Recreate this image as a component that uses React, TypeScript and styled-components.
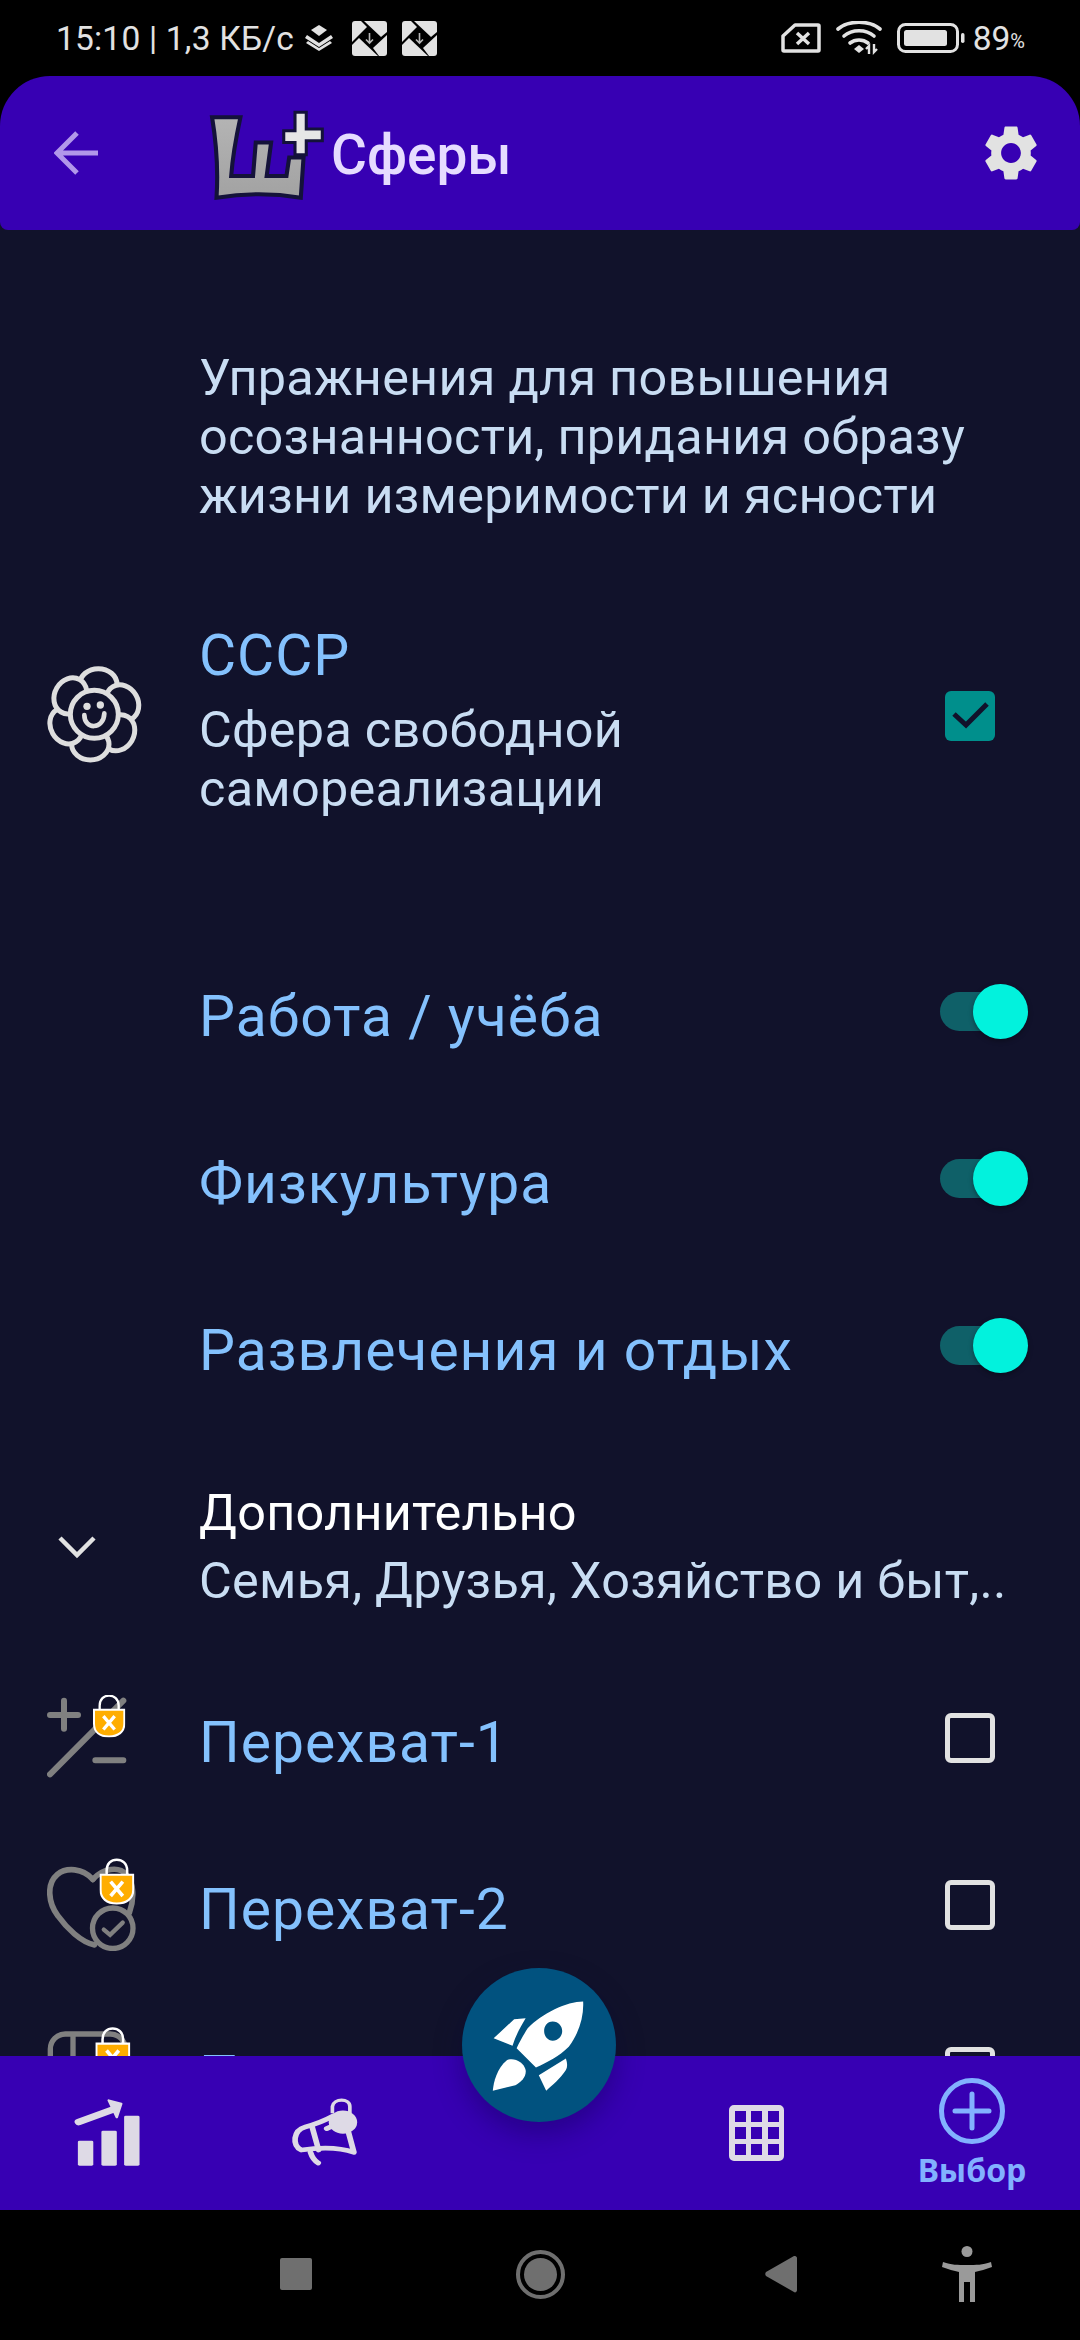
import React from "react";
import styled, { createGlobalStyle } from "styled-components";

const GlobalStyle = createGlobalStyle`
  html, body { margin: 0; padding: 0; background: #000; }
  body { font-family: Roboto, "Noto Sans", sans-serif; }
`;

const BG = "#11122b";
const PURPLE = "#3700b3";
const GREY = "#808080";

const Screen = styled.div`
  width: 1080px;
  height: 2340px;
  display: grid;
  grid-template-rows: 76px 154px 1fr 154px 130px;
  background: #000;
  position: relative;
  overflow: hidden;
`;

// status bar
const StatusBar = styled.div`
  display: flex;
  align-items: center;
  padding: 0 55px 0 56px;
  color: #e2e2e2;
  font-size: 33.5px;
  letter-spacing: 0.2px;
`;
const StatusText = styled.span`
  white-space: nowrap;
`;
const BatteryText = styled(StatusText)`
  margin-left: 8px;
  letter-spacing: 0;
`;
const Percent = styled.span`
  font-size: 20px;
  letter-spacing: 0;
  align-self: flex-end;
  margin-bottom: 23px;
`;
const Spacer = styled.div`
  flex: 1;
`;
const StatusIcon = styled.svg<{ $gap?: number }>`
  display: block;
  flex: none;
  margin-left: ${(p) => p.$gap ?? 0}px;
`;

// top bar
const AppBar = styled.header`
  background: ${PURPLE};
  border-radius: 50px 50px 8px 8px;
  display: flex;
  align-items: center;
  padding: 0 36px 0 54px;
  position: relative;
  z-index: 2;
`;
const LogoBox = styled.div`
  display: flex;
  margin: 3px 0 0 110px;
`;
const Title = styled.h1`
  margin: 4px 0 0 7px;
  font-size: 55px;
  font-weight: 500;
  color: #e6dcff;
  flex: 1;
`;

// content
const Content = styled.main`
  background: ${BG};
  margin-top: -8px;
  padding-top: 126px;
  overflow: hidden;
`;
const Intro = styled.p`
  margin: 0 0 98px 199px;
  font-size: 50.4px;
  line-height: 59px;
  letter-spacing: 0.25px;
  width: 800px;
  color: #c9ddf3;
`;
const Row = styled.div<{ $tall?: boolean }>`
  display: grid;
  grid-template-columns: 199px 1fr 220px;
  align-items: center;
  height: ${(p) => (p.$tall ? "auto" : "167px")};
`;
const SphereRow = styled(Row)`
  margin-bottom: 115px;
`;
const LeftIcon = styled.div`
  padding-left: 47px;
  margin-bottom: 12px;
  display: flex;
`;
const Chevron = styled.svg`
  display: block;
  margin-left: 57px;
`;
const RowTitle = styled.div`
  font-size: 57px;
  line-height: 66px;
  color: #84c1fd;
  letter-spacing: 1px;
`;
const RowSub = styled.div`
  font-size: 50.4px;
  line-height: 59px;
  letter-spacing: 0.25px;
  margin-top: 11px;
  color: #c9ddf3;
`;
const Control = styled.div`
  display: flex;
  justify-content: center;
  margin-bottom: 10px;
`;
const Check = styled.div<{ $on?: boolean }>`
  width: 50px;
  height: 50px;
  box-sizing: border-box;
  border-radius: 6px;
  background: ${(p) => (p.$on ? "#008f8c" : "transparent")};
  border: ${(p) => (p.$on ? "none" : "5px solid #e2e2e2")};
  display: flex;
  align-items: center;
  justify-content: center;
`;
const Track = styled.div`
  width: 74px;
  height: 39px;
  border-radius: 20px;
  background: #0f6068;
  position: relative;
  margin-left: 14px;
`;
const Thumb = styled.div`
  position: absolute;
  width: 55px;
  height: 55px;
  border-radius: 50%;
  top: -8px;
  right: -14px;
  background: #02f2dd;
  box-shadow: 0 2px 5px rgba(0, 0, 0, 0.35);
`;
const MoreRow = styled.div`
  display: flex;
  align-items: center;
  height: 225px;
`;
const MoreText = styled.div`
  margin-left: 102px;
`;
const MoreTitle = styled.div`
  font-size: 50.4px;
  line-height: 59px;
  letter-spacing: 0.25px;
  color: #fff;
`;
const MoreSub = styled.div`
  font-size: 50.4px;
  line-height: 59px;
  letter-spacing: 0.25px;
  margin-top: 9px;
  color: #c9ddf3;
  white-space: nowrap;
`;

// bottom navigation
const BottomNav = styled.nav`
  background: ${PURPLE};
  display: grid;
  grid-template-columns: 216px 216px 216px 216px 216px;
  position: relative;
  z-index: 2;
`;
const NavItem = styled.div<{ $top?: number }>`
  display: flex;
  flex-direction: column;
  align-items: center;
  padding-top: ${(p) => p.$top ?? 42}px;
`;
const NavLabel = styled.span`
  font-family: "Noto Sans", sans-serif;
  font-weight: 700;
  font-size: 32px;
  line-height: 40px;
  color: #82b1ff;
  margin-top: 6px;
`;
const Fab = styled.div`
  position: absolute;
  left: 462px;
  top: -88px;
  width: 154px;
  height: 154px;
  border-radius: 50%;
  background: #01527f;
  box-shadow: 0 12px 28px rgba(10, 0, 60, 0.35);
  display: flex;
`;

// system navigation
const SystemNav = styled.div`
  display: flex;
  align-items: center;
  padding-left: 280px;
  padding-bottom: 2px;
`;
const SysSquare = styled.div`
  width: 32px;
  height: 32px;
  border-radius: 2px;
  background: #6f6f6f;
`;
const SysCircle = styled.div`
  width: 49px;
  height: 49px;
  box-sizing: border-box;
  border-radius: 50%;
  border: 4px solid #6f6f6f;
  margin-left: 204px;
  display: flex;
  align-items: center;
  justify-content: center;
  &::after {
    content: "";
    width: 33px;
    height: 33px;
    border-radius: 50%;
    background: #6f6f6f;
  }
`;
const SysBack = styled.svg`
  margin-left: 200px;
`;
const SysPerson = styled.svg`
  margin-left: 145px;
`;

const Lock = ({ x, y, w = 97, h = 129 }: { x: number; y: number; w?: number; h?: number }) => (
  <svg x={x} y={y} width={w} height={h} viewBox="0 0 97 129">
    <path d="M20 50V34C20 14 33 4 48 4S77 14 77 34V50" fill="none" stroke="#fff" strokeWidth="7" />
    <path d="M3 46H94V88C94 112 76 126 48 126S3 112 3 88Z" fill="#ffad00" stroke="#fff" strokeWidth="6" />
    <path d="M31 65L65 105M65 65L31 105" stroke="#fff" strokeWidth="10" />
  </svg>
);

const WandIcon = () => (
  <svg width="80" height="83" viewBox="145 105 240 248" preserveAspectRatio="none">
    <g stroke={GREY} strokeWidth="18" strokeLinecap="round" fill="none">
      <path d="M154 165H238M196 122V206M290 300H374M154 342L374 122" />
    </g>
    <Lock x={283} y={103} />
  </svg>
);

const HeartIcon = () => (
  <svg width="89" height="94" viewBox="147 588 268 282">
    <g stroke={GREY} strokeWidth="17" fill="none" strokeLinecap="round">
      <path d="M285 655C255 620 205 618 178 640C145 668 150 725 180 765C205 800 250 845 290 852" />
      <path d="M285 655C315 620 365 615 385 640C410 665 410 715 395 755" />
    </g>
    <circle cx="345" cy="802" r="61" fill={BG} stroke={GREY} strokeWidth="16" />
    <path d="M318 806L337 822L375 785" fill="none" stroke={GREY} strokeWidth="13" strokeLinecap="round" />
    <Lock x={305} y={590} w={105} h={142} />
  </svg>
);

const PanelIcon = () => (
  <svg width="84" height="90" viewBox="160 1088 252 270">
    <g stroke={GREY} strokeWidth="16" fill="none">
      <rect x="170" y="1112" width="225" height="200" rx="45" />
      <path d="M238 1112V1312" />
      <circle cx="283" cy="1205" r="18" />
    </g>
    <Lock x={305} y={1090} w={105} h={142} />
  </svg>
);

const Flower = () => (
  <svg width="96" height="97" viewBox="80 203 288 291">
    {[0, 60, 120, 180, 240, 300].map((a) => (
      <ellipse
        key={a}
        cx="234"
        cy="258"
        rx="56"
        ry="47"
        fill={BG}
        stroke="#dedede"
        strokeWidth="15"
        transform={`rotate(${a} 222 348)`}
      />
    ))}
    <circle cx="222" cy="348" r="72" fill={BG} stroke="#dedede" strokeWidth="15" />
    <circle cx="200" cy="324" r="11" fill="#dedede" />
    <circle cx="240" cy="320" r="11" fill="#dedede" />
    <path d="M192 350C192 395 250 395 252 345" fill="none" stroke="#dedede" strokeWidth="14" strokeLinecap="round" />
  </svg>
);

const AppLogo = () => (
  <svg width="116" height="91" viewBox="600 325 340 272" preserveAspectRatio="none">
    <defs>
      <linearGradient id="logoFill" x1="0" y1="0" x2="0" y2="1">
        <stop offset="0" stopColor="#b4b4b4" />
        <stop offset="1" stopColor="#a2a2a2" />
      </linearGradient>
    </defs>
    <path
      d="M612 350H695C680 420 672 470 668 525H732L740 425H785L772 525H830L838 470H880L872 590C780 575 700 578 625 590C630 510 625 430 612 350Z"
      fill="url(#logoFill)"
      stroke="#14123a"
      strokeWidth="12"
    />
    <path
      d="M855 335H888V385H935V420H888V462H855V425H822V390H855Z"
      fill="#e6e6e6"
      stroke="#14123a"
      strokeWidth="9"
    />
  </svg>
);

const NotifIcon = ({ gap }: { gap: number }) => (
  <StatusIcon $gap={gap} width="35" height="35" viewBox="0 0 35 35">
    <rect width="35" height="35" rx="4" fill="#000" />
    <g fill="#e2e2e2">
      <path d="M3 0H9L15 6L0 21V3A3 3 0 0 1 3 0Z" />
      <path d="M12 0H32A3 3 0 0 1 35 3V11L29 16Z" />
      <path d="M0 24L7 17L26 35H3A3 3 0 0 1 0 32Z" />
      <path d="M35 14V32A3 3 0 0 1 32 35H27L21 27Z" />
    </g>
    <path d="M17.5 12V22M14 18.5L17.5 22L21 18.5" stroke="#b8b8b8" strokeWidth="1.6" fill="none" />
  </StatusIcon>
);

const Toggle = () => (
  <Control>
    <Track>
      <Thumb />
    </Track>
  </Control>
);

const EmptyCheck = () => (
  <Control>
    <Check />
  </Control>
);

export default function App() {
  return (
    <Screen>
      <GlobalStyle />
      <StatusBar>
        <StatusText>15:10 | 1,3 КБ/с</StatusText>
        <StatusIcon $gap={11} width="28" height="26" viewBox="0 0 28 26">
          <path d="M14 0L22 5L14 11L6 5Z" fill="#e2e2e2" />
          <path d="M2 10L14 18L26 10L28 13L14 22L0 13Z" fill="#e2e2e2" />
          <path d="M3 16L14 23L25 16L27 18L14 26L1 18Z" fill="#e2e2e2" />
        </StatusIcon>
        <NotifIcon gap={19} />
        <NotifIcon gap={15} />
        <Spacer />
        <StatusIcon width="40" height="30" viewBox="0 0 40 30">
          <path d="M14 2H37A1 1 0 0 1 38 3V27A1 1 0 0 1 37 28H3A1 1 0 0 1 2 27V13Z" fill="none" stroke="#e2e2e2" strokeWidth="3.5" strokeLinejoin="round" />
          <path d="M16 10L28 21M28 10L16 21" stroke="#e2e2e2" strokeWidth="3.5" />
        </StatusIcon>
        <StatusIcon $gap={15} width="46" height="34" viewBox="0 0 46 34">
          <g fill="none" stroke="#e2e2e2" strokeWidth="3.6" strokeLinecap="round">
            <path d="M2 8C13 -1 33 -1 44 8" />
            <path d="M8 15C16 8 30 8 38 15" />
            <path d="M14 22C19 18 27 18 32 22" />
          </g>
          <path d="M18 28L23 24L28 28L23 32Z" fill="#e2e2e2" />
          <path d="M33 33V25L30 28M38 23V31L41 28" stroke="#e2e2e2" strokeWidth="2.4" fill="none" />
        </StatusIcon>
        <StatusIcon $gap={15} width="68" height="30" viewBox="0 0 68 30">
          <rect x="1.5" y="1.5" width="59" height="27" rx="7" fill="none" stroke="#e2e2e2" strokeWidth="3" />
          <rect x="7" y="7" width="43" height="16" rx="2.5" fill="#e2e2e2" />
          <rect x="64" y="10" width="3.5" height="10" rx="1.7" fill="#e2e2e2" />
        </StatusIcon>
        <BatteryText>89</BatteryText>
        <Percent>%</Percent>
      </StatusBar>

      <AppBar>
        <svg width="44" height="44" viewBox="0 0 44 44">
          <path d="M44 22H3M23 2L3 22L23 42" fill="none" stroke="#b197ea" strokeWidth="5" />
        </svg>
        <LogoBox>
          <AppLogo />
        </LogoBox>
        <Title>Сферы</Title>
        <svg width="66" height="66" viewBox="0 0 24 24" fill="#e2e2e2">
          <path d="M19.14 12.94c.04-.3.06-.61.06-.94 0-.32-.02-.64-.07-.94l2.03-1.58c.18-.14.23-.41.12-.61l-1.92-3.32c-.12-.22-.37-.29-.59-.22l-2.39.96c-.5-.38-1.03-.7-1.62-.94l-.36-2.54c-.04-.24-.24-.41-.48-.41h-3.84c-.24 0-.43.17-.47.41l-.36 2.54c-.59.24-1.13.57-1.62.94l-2.39-.96c-.22-.08-.47 0-.59.22L2.74 8.87c-.12.21-.08.47.12.61l2.03 1.58c-.05.3-.09.63-.09.94s.02.64.07.94l-2.03 1.58c-.18.14-.23.41-.12.61l1.92 3.32c.12.22.37.29.59.22l2.39-.96c.5.38 1.03.7 1.62.94l.36 2.54c.05.24.24.41.48.41h3.84c.24 0 .44-.17.47-.41l.36-2.54c.59-.24 1.13-.56 1.62-.94l2.39.96c.22.08.47 0 .59-.22l1.92-3.32c.12-.22.07-.47-.12-.61l-2.01-1.58zM12 15.6c-1.98 0-3.6-1.62-3.6-3.6s1.62-3.6 3.6-3.6 3.6 1.62 3.6 3.6-1.62 3.6-3.6 3.6z" />
        </svg>
      </AppBar>

      <Content>
        <Intro>Упражнения для повышения осознанности, придания образу жизни измеримости и ясности</Intro>

        <SphereRow $tall>
          <LeftIcon>
            <Flower />
          </LeftIcon>
          <div>
            <RowTitle>СССР</RowTitle>
            <RowSub>
              Сфера свободной
              <br />
              самореализации
            </RowSub>
          </div>
          <Control>
            <Check $on>
              <svg width="38" height="32" viewBox="0 0 38 32">
                <path d="M3 14L15 25L36 4" fill="none" stroke={BG} strokeWidth="5" />
              </svg>
            </Check>
          </Control>
        </SphereRow>

        <Row>
          <span />
          <RowTitle>Работа / учёба</RowTitle>
          <Toggle />
        </Row>
        <Row>
          <span />
          <RowTitle>Физкультура</RowTitle>
          <Toggle />
        </Row>
        <Row>
          <span />
          <RowTitle>Развлечения и отдых</RowTitle>
          <Toggle />
        </Row>

        <MoreRow>
          <Chevron width="40" height="24" viewBox="0 0 40 24">
            <path d="M3 3L20 20L37 3" fill="none" stroke="#e2e2e2" strokeWidth="4.5" />
          </Chevron>
          <MoreText>
            <MoreTitle>Дополнительно</MoreTitle>
            <MoreSub>Семья, Друзья, Хозяйство и быт,..</MoreSub>
          </MoreText>
        </MoreRow>

        <Row>
          <LeftIcon>
            <WandIcon />
          </LeftIcon>
          <RowTitle>Перехват-1</RowTitle>
          <EmptyCheck />
        </Row>
        <Row>
          <LeftIcon>
            <HeartIcon />
          </LeftIcon>
          <RowTitle>Перехват-2</RowTitle>
          <EmptyCheck />
        </Row>
        <Row>
          <LeftIcon>
            <PanelIcon />
          </LeftIcon>
          <RowTitle>Перехват-3</RowTitle>
          <EmptyCheck />
        </Row>
      </Content>

      <BottomNav>
        <NavItem>
          <svg width="71" height="70" viewBox="180 445 175 210" preserveAspectRatio="none">
            <g fill="#dedae6">
              <rect x="192" y="573" width="38" height="75" rx="4" />
              <rect x="250" y="543" width="38" height="105" rx="4" />
              <rect x="306" y="498" width="38" height="150" rx="4" />
            </g>
            <path d="M194 517L282 478" stroke="#dedae6" strokeWidth="20" strokeLinecap="round" />
            <path d="M299 462L268 452L288 503Z" fill="#dedae6" stroke="#dedae6" strokeWidth="6" strokeLinejoin="round" />
          </svg>
        </NavItem>
        <NavItem>
          <svg width="71" height="68" viewBox="705 445 175 200" preserveAspectRatio="none">
            <g fill="none" stroke="#dedae6" strokeWidth="14" strokeLinecap="round" strokeLinejoin="round">
              <path d="M815 497C795 510 770 522 745 530C715 540 712 585 735 598C780 590 830 590 865 605L848 530" />
              <path d="M762 530L778 598M758 605C762 620 768 630 777 636M798 535L825 520" />
            </g>
            <path d="M812 490V470C815 445 855 445 855 470V490" fill="none" stroke="#dedae6" strokeWidth="9" />
            <ellipse cx="838" cy="516" rx="35" ry="34" fill="#dedae6" />
          </svg>
        </NavItem>
        <span />
        <NavItem $top={49}>
          <svg width="55" height="56" viewBox="0 0 55 56">
            <path
              fillRule="evenodd"
              fill="#dedae6"
              d="M5 0H50A5 5 0 0 1 55 5V51A5 5 0 0 1 50 56H5A5 5 0 0 1 0 51V5A5 5 0 0 1 5 0ZM6 6V17H17V6ZM22 6V17H33V6ZM39 6V17H50V6ZM6 22V34H17V22ZM22 22V34H33V22ZM39 22V34H50V22ZM6 39V50H17V39ZM22 39V50H33V39ZM39 39V50H50V39Z"
            />
          </svg>
        </NavItem>
        <NavItem $top={22}>
          <svg width="66" height="66" viewBox="0 0 66 66">
            <circle cx="33" cy="33" r="30.5" fill="none" stroke="#82b1ff" strokeWidth="5" />
            <path d="M33 16V50M16 33H50" stroke="#82b1ff" strokeWidth="5" strokeLinecap="round" />
          </svg>
          <NavLabel>Выбор</NavLabel>
        </NavItem>
        <Fab>
          <svg width="154" height="154" viewBox="1135 55 375 460" preserveAspectRatio="none">
            <g fill="#fff">
              <path
                fillRule="evenodd"
                d="M1430 155C1390 155 1330 190 1295 235C1285 255 1275 275 1268 295L1315 352C1345 335 1370 320 1395 290C1420 250 1432 200 1430 155ZM1356 215C1342 215 1335 230 1335 243C1335 258 1343 272 1356 272C1370 272 1379 258 1379 243C1379 230 1370 215 1356 215Z"
              />
              <path d="M1212 265L1262 208L1290 205C1275 235 1265 260 1258 287Z" />
              <path d="M1322 375L1388 325C1392 340 1392 350 1388 360C1375 385 1355 405 1340 422Z" />
              <path d="M1210 422C1212 395 1220 355 1245 330C1262 322 1285 335 1290 360C1292 380 1280 395 1265 405Z" />
            </g>
          </svg>
        </Fab>
      </BottomNav>

      <SystemNav>
        <SysSquare />
        <SysCircle />
        <SysBack width="32" height="38" viewBox="0 0 32 38">
          <path d="M30 1C31 1 32 2 32 3V35C32 37 30 38 29 37L1 21C0 20 0 18 1 17L29 1Z" fill="#6f6f6f" />
        </SysBack>
        <SysPerson width="50" height="56" viewBox="0 0 50 56">
          <ellipse cx="25" cy="5.5" rx="5.5" ry="5.5" fill="#9a9a9a" />
          <path
            d="M1 16C10 19 15 19 25 19S40 19 49 16L50 21C44 23 38 25 33 26V56H28V36H22V56H17V26C12 25 6 23 0 21Z"
            fill="#9a9a9a"
          />
        </SysPerson>
      </SystemNav>
    </Screen>
  );
}
